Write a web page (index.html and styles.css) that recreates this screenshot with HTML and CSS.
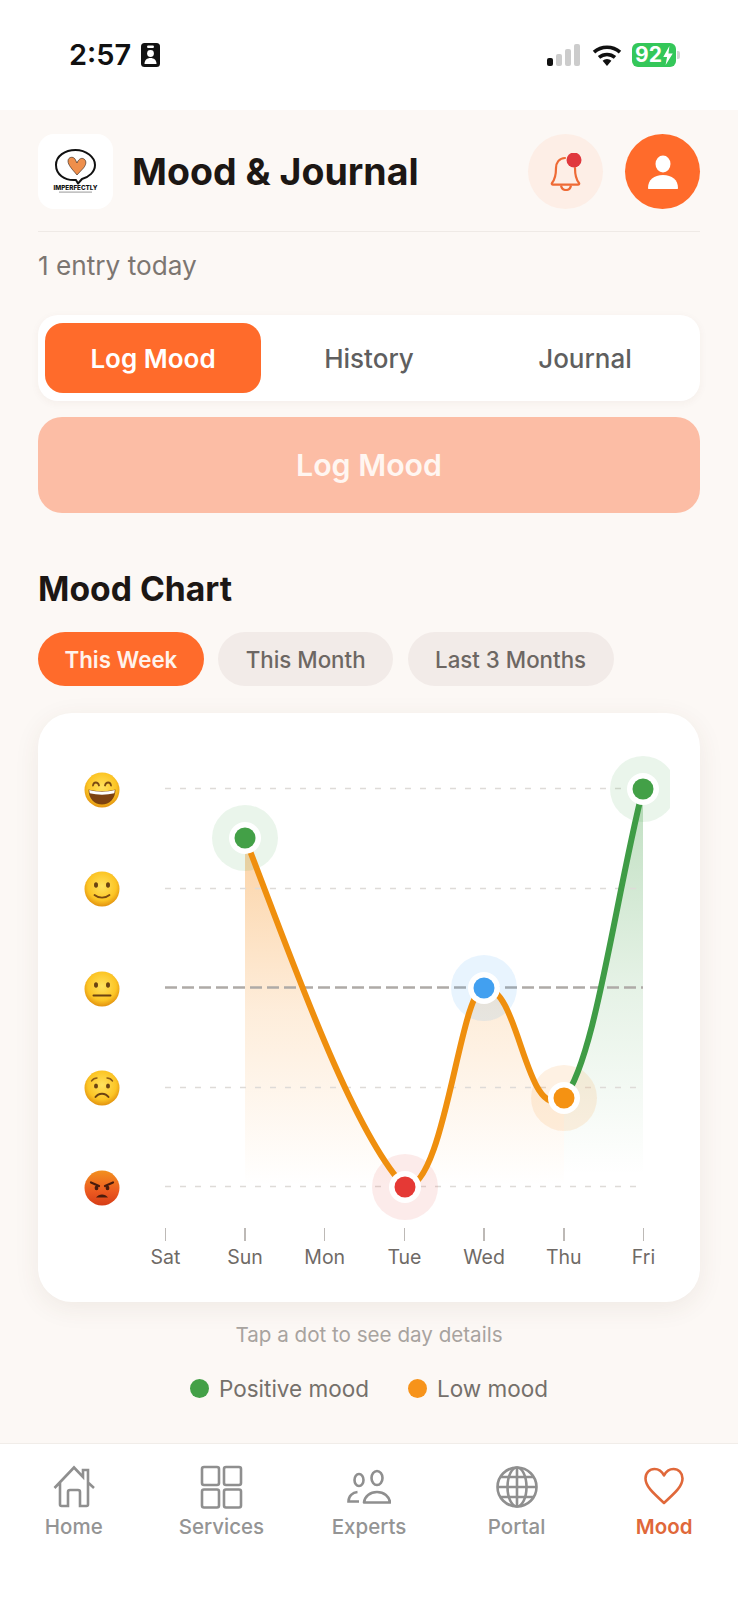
FILE: index.html
```html
<!DOCTYPE html>
<html lang="en">
<head>
  <meta charset="UTF-8" />
  <meta name="viewport" content="width=device-width, initial-scale=1.0"/>
  <title>Mood &amp; Journal</title>
  <link rel="stylesheet" href="styles.css">
</head>
<body>
  <svg class="defs" width="0" height="0">
    <defs>
      <radialGradient id="yellow" cx="50%" cy="42%" r="58%">
        <stop offset="0" stop-color="#ffe25e"/>
        <stop offset="0.7" stop-color="#fcc525"/>
        <stop offset="1" stop-color="#e2920f"/>
      </radialGradient>
      <linearGradient id="angry" x1="0" y1="0" x2="0" y2="1">
        <stop offset="0" stop-color="#f2901f"/>
        <stop offset="0.6" stop-color="#ec5a20"/>
        <stop offset="1" stop-color="#d63d17"/>
      </linearGradient>
      <linearGradient id="fillOrange" gradientUnits="userSpaceOnUse" x1="0" y1="838" x2="0" y2="1186">
        <stop offset="0" stop-color="#f7962a" stop-opacity="0.42"/>
        <stop offset="0.5" stop-color="#f7962a" stop-opacity="0.17"/>
        <stop offset="1" stop-color="#f7962a" stop-opacity="0"/>
      </linearGradient>
      <linearGradient id="fillGreen" gradientUnits="userSpaceOnUse" x1="0" y1="789" x2="0" y2="1175">
        <stop offset="0" stop-color="#43a047" stop-opacity="0.34"/>
        <stop offset="0.5" stop-color="#43a047" stop-opacity="0.14"/>
        <stop offset="1" stop-color="#43a047" stop-opacity="0"/>
      </linearGradient>
    </defs>
  </svg>

  <div class="statusbar">
    <div class="status-left">
      <span class="time">2:57</span>
      <svg class="id-icon" viewBox="0 0 19 24">
        <rect width="19" height="24" rx="3.500" fill="#111"/>
        <rect x="6" y="2.500" width="7" height="2.400" rx="1.200" fill="#fff"/>
        <circle cx="9.500" cy="10.500" r="3.400" fill="#fff"/>
        <path d="M3.500 21c0-4 2.500-6 6-6s6 2 6 6z" fill="#fff"/>
      </svg>
    </div>
    <div class="status-right">
      <svg class="signal" viewBox="0 0 34 22">
        <rect x="0" y="14" width="6" height="8" rx="2" fill="#111"/>
        <rect x="9" y="10" width="6" height="12" rx="2" fill="#ccc"/>
        <rect x="18" y="5" width="6" height="17" rx="2" fill="#ccc"/>
        <rect x="27" y="0" width="6" height="22" rx="2" fill="#ccc"/>
      </svg>
      <svg class="wifi" viewBox="0 0 30 22">
        <path d="M15 22l-4.400-5.200a6.600 6.600 0 0 1 8.800 0z" fill="#111"/>
        <path d="M2 8.200a19.500 19.500 0 0 1 26 0M7 13.400a12.400 12.400 0 0 1 16 0" fill="none" stroke="#111" stroke-width="3.600"/>
      </svg>
      <div class="battery">
        <span>92</span>
        <svg class="bolt" viewBox="0 0 10 20"><path d="M6.500 0L0 11.500h4L2.500 20 10 8H5.500z" fill="#fff"/></svg>
        <i class="battery-cap"></i>
      </div>
    </div>
  </div>

  <main>
    <header>
      <div class="logo">
        <svg viewBox="0 0 75 75" width="75" height="75">
          <path d="M38 46C26 47 18 40 18 31 18 22 27 16 37.500 16 48 16 57 23 57 31 57 38 51 43 44 45L40 49.500z" fill="none" stroke="#111" stroke-width="2" stroke-linejoin="round"/>
          <path d="M39 41C34 35 30 31 30 27c0-4 5-5 7-2l2 4c1-3 4-6 7-4 3 2 2 6-.5 9z" fill="#ee8f4c" stroke="#2a1c14" stroke-width="0.600"/>
          <text x="37.500" y="55.500" class="logo-name">IMPERFECTLY</text>
          <rect x="21" y="57.500" width="33" height="1.200" fill="#aaa"/>
        </svg>
      </div>
      <h1>Mood &amp; Journal</h1>
      <div class="head-btns">
        <div class="round-btn bell-btn">
          <svg viewBox="0 0 32 38" width="32" height="38">
            <path d="M15 5c-6 0-9 5-9 10 0 8-1.500 12-4 15-.6.800 0 1.600 1 1.600h25c1 0 1.600-.8 1-1.600-2.500-3-4-7-4-15" fill="none" stroke="#ee6a35" stroke-width="2.200" stroke-linecap="round"/>
            <path d="M11 32.500c.6 3 2.500 4.500 5 4.500s4.400-1.500 5-4.500" fill="none" stroke="#ee6a35" stroke-width="2.200"/>
            <circle cx="24" cy="7" r="7.500" fill="#e0383e"/>
          </svg>
        </div>
        <div class="round-btn avatar-btn">
          <svg viewBox="0 0 32 34" width="32" height="34">
            <ellipse cx="16" cy="9" rx="7.500" ry="8.500" fill="#fff"/>
            <path d="M1 33c0-8 6-13 15-13s15 5 15 13c0 .6-.4 1-1 1H2c-.6 0-1-.4-1-1z" fill="#fff"/>
          </svg>
        </div>
      </div>
    </header>

    <p class="subtitle">1 entry today</p>

    <div class="tabs">
      <button class="tab active">Log Mood</button>
      <button class="tab">History</button>
      <button class="tab">Journal</button>
    </div>

    <button class="log-btn">Log Mood</button>

    <h2>Mood Chart</h2>

    <div class="pills">
      <button class="pill active">This Week</button>
      <button class="pill">This Month</button>
      <button class="pill">Last 3 Months</button>
    </div>

    <section class="chart-card">
      <div class="chart-body">
        <div class="emoji-col">
          <svg class="emoji" viewBox="0 0 36 36">
            <circle cx="18" cy="18" r="17.500" fill="url(#yellow)"/>
            <path d="M9 13.500c.5-4 5-4 6 0M21 13.500c1-4 5.500-4 6 0" fill="none" stroke="#7a4a12" stroke-width="1.800" stroke-linecap="round"/>
            <path d="M4.500 17.500c8 2.400 19 2.400 27 0 0 9-6 15-13.500 15S4.500 26.500 4.500 17.500z" fill="#7d4210"/>
            <path d="M5.200 18c8 2.200 17.600 2.200 25.600 0l-.5 3.200c-7.500 1.900-17.100 1.900-24.600 0z" fill="#fff"/>
          </svg>
          <svg class="emoji" viewBox="0 0 36 36">
            <circle cx="18" cy="18" r="17.500" fill="url(#yellow)"/>
            <ellipse cx="12" cy="14" rx="2" ry="2.800" fill="#6b4312"/>
            <ellipse cx="24" cy="14" rx="2" ry="2.800" fill="#6b4312"/>
            <path d="M10.500 24c4 3.400 11 3.400 15 0" fill="none" stroke="#7a4a12" stroke-width="1.800" stroke-linecap="round"/>
          </svg>
          <svg class="emoji" viewBox="0 0 36 36">
            <circle cx="18" cy="18" r="17.500" fill="url(#yellow)"/>
            <ellipse cx="12" cy="14" rx="2" ry="2.800" fill="#6b4312"/>
            <ellipse cx="24" cy="14" rx="2" ry="2.800" fill="#6b4312"/>
            <path d="M9.500 24.500h17" fill="none" stroke="#6b4312" stroke-width="2" stroke-linecap="round"/>
          </svg>
          <svg class="emoji" viewBox="0 0 36 36">
            <circle cx="18" cy="18" r="17.500" fill="url(#yellow)"/>
            <path d="M7.500 11c1.500-2 3.500-3 5.500-3M28.500 11c-1.500-2-3.500-3-5.500-3" fill="none" stroke="#8a5a18" stroke-width="1.400" stroke-linecap="round"/>
            <ellipse cx="12" cy="16" rx="2" ry="2.600" fill="#6b4312"/>
            <ellipse cx="24" cy="16" rx="2" ry="2.600" fill="#6b4312"/>
            <path d="M11.500 27c3-4.500 10-4.500 13 0" fill="none" stroke="#6b4312" stroke-width="2" stroke-linecap="round"/>
          </svg>
          <svg class="emoji" viewBox="0 0 36 36">
            <circle cx="18" cy="18" r="17.500" fill="url(#angry)"/>
            <path d="M7 12.500l8 3.500M29 12.500l-8 3.500" fill="none" stroke="#4a1c0c" stroke-width="2.200" stroke-linecap="round"/>
            <ellipse cx="12.500" cy="18" rx="1.900" ry="2.300" fill="#4a1c0c"/>
            <ellipse cx="23.500" cy="18" rx="1.900" ry="2.300" fill="#4a1c0c"/>
            <path d="M12 27.500c3-4 9-4 12 0z" fill="#4a1c0c"/>
          </svg>
        </div>

        <svg class="plot" viewBox="145 755 525 470" width="525" height="470">
          <path d="M245 838C285 940 350 1130 405 1187C445 1190 460 988 484 988C520 985 525 1125 564 1098V1186H245Z" fill="url(#fillOrange)"/>
          <path d="M564 1098C595 1060 615 900 643 789V1186H564Z" fill="url(#fillGreen)"/>

          <path class="grid-line" d="M165 788.500H640M165 888.500H640M165 1087.500H640M165 1186.500H640"/>
          <path class="mid-line" d="M165 987.500H643"/>

          <circle cx="245" cy="838" r="33" fill="#43a047" fill-opacity="0.11"/>
          <circle cx="484" cy="988" r="33" fill="#42a5f5" fill-opacity="0.12"/>
          <circle cx="643" cy="789" r="33" fill="#43a047" fill-opacity="0.11"/>
          <circle cx="564" cy="1098" r="33" fill="#f7962a" fill-opacity="0.13"/>
          <circle cx="405" cy="1187" r="33" fill="#e53935" fill-opacity="0.1"/>

          <path class="curve" stroke="#ef8f0e" d="M245 838C285 940 350 1130 405 1187C445 1190 460 988 484 988C520 985 525 1125 564 1098"/>
          <path class="curve" stroke="#3f9c46" d="M564 1098C595 1060 615 900 643 789"/>

          <circle class="ring" cx="245" cy="838" r="16"/>
          <circle cx="245" cy="838" r="10.500" fill="#43a047"/>
          <circle class="ring" cx="405" cy="1187" r="16"/>
          <circle cx="405" cy="1187" r="10.500" fill="#e53935"/>
          <circle class="ring" cx="484" cy="988" r="16"/>
          <circle cx="484" cy="988" r="10.500" fill="#42a0f0"/>
          <circle class="ring" cx="564" cy="1098" r="16"/>
          <circle cx="564" cy="1098" r="10.500" fill="#f59212"/>
          <circle class="ring" cx="643" cy="789" r="16"/>
          <circle cx="643" cy="789" r="10.500" fill="#43a047"/>
        </svg>
      </div>

      <div class="days">
        <div class="day">Sat</div>
        <div class="day">Sun</div>
        <div class="day">Mon</div>
        <div class="day">Tue</div>
        <div class="day">Wed</div>
        <div class="day">Thu</div>
        <div class="day">Fri</div>
      </div>
    </section>

    <p class="hint">Tap a dot to see day details</p>

    <div class="legend">
      <span class="legend-item"><i class="legend-dot green"></i>Positive mood</span>
      <span class="legend-item"><i class="legend-dot orange"></i>Low mood</span>
    </div>
  </main>

  <nav>
    <div class="nav-item">
      <svg viewBox="0 0 44 44" width="44" height="44">
        <path d="M2.500 23L22 2.500l9 9.500V5h5v12.500L42 23M8 18v21.500a1.500 1.500 0 0 0 1.500 1.500H16V27a2 2 0 0 1 2-2h8a2 2 0 0 1 2 2v14h6.500a1.500 1.500 0 0 0 1.500-1.500V18"/>
      </svg>
      <span>Home</span>
    </div>
    <div class="nav-item">
      <svg viewBox="0 0 44 44" width="44" height="44">
        <rect x="3" y="2" width="17" height="18" rx="2"/>
        <rect x="25" y="2" width="17" height="18" rx="2"/>
        <rect x="3" y="24.500" width="17" height="18" rx="2"/>
        <rect x="25" y="24.500" width="17" height="18" rx="2"/>
      </svg>
      <span>Services</span>
    </div>
    <div class="nav-item">
      <svg viewBox="0 0 44 44" width="44" height="44">
        <ellipse cx="12" cy="15" rx="4.500" ry="6"/>
        <ellipse cx="30" cy="13" rx="5.500" ry="7"/>
        <path d="M17 37.500c.6-6 6-10.500 13-10.500s12.400 4.500 13 10.500z" stroke-linejoin="round"/>
        <path d="M12 36.500H1.500c0-5.500 4-9 9-9.500"/>
      </svg>
      <span>Experts</span>
    </div>
    <div class="nav-item">
      <svg viewBox="0 0 44 44" width="44" height="44">
        <circle cx="22" cy="22" r="19.500"/>
        <ellipse cx="22" cy="22" rx="9.500" ry="19.500"/>
        <path d="M22 2.500v39M2.500 22h39M5.500 12h33M5.500 32h33"/>
      </svg>
      <span>Portal</span>
    </div>
    <div class="nav-item active">
      <svg viewBox="0 0 44 44" width="44" height="44">
        <path d="M22 38C10 27 3.500 21 3.500 13.500 3.500 8 7.500 4 12.500 4c4 0 7.500 2.500 9.500 6.500C24 6.500 27.500 4 31.500 4c5 0 9 4 9 9.500C40.500 21 34 27 22 38z" stroke-linejoin="round"/>
      </svg>
      <span>Mood</span>
    </div>
  </nav>
</body>
</html>
```

FILE: styles.css
```css
* { box-sizing: border-box; }
html, body { margin: 0; padding: 0; }
body {
  font-family: Inter, "Noto Sans", sans-serif;
  background: #fcf8f5;
  color: #1c1714;
  width: 738px;
  min-height: 1600px;
  display: flex;
  flex-direction: column;
}
button { font-family: inherit; border: none; cursor: pointer; }
.defs { display: block; height: 0; }

/* status bar */
.statusbar {
  height: 110px;
  background: #fff;
  display: flex;
  justify-content: space-between;
  padding: 43px 62px 0 69px;
}
.status-left { display: flex; gap: 10px; height: 24px; align-items: center; }
.time { font-size: 29px; font-weight: 600; color: #111; line-height: 24px; }
.id-icon { width: 19px; height: 24px; }
.status-right { display: flex; align-items: center; height: 24px; }
.signal { width: 34px; height: 22px; margin-right: 11px; }
.wifi { width: 30px; height: 22px; margin-right: 10px; }
.battery {
  position: relative;
  width: 44px;
  height: 24px;
  border-radius: 6px;
  background: #34c759;
  color: #fff;
  font-size: 21px;
  font-weight: 700;
  line-height: 24px;
  display: flex;
  align-items: center;
  padding-left: 3px;
  gap: 1px;
}
.bolt { width: 10px; height: 19px; }
.battery-cap {
  position: absolute;
  right: -4px;
  top: 8px;
  width: 3px;
  height: 8px;
  border-radius: 0 2px 2px 0;
  background: #d4d4d4;
}

/* page */
main { flex: 1; padding: 24px 38px 0; }
header {
  display: flex;
  align-items: center;
  padding-bottom: 21.500px;
  border-bottom: 1.500px solid #efeae6;
}
.logo { width: 75px; height: 75px; background: #fff; border-radius: 16px; flex: none; }
.logo svg { display: block; }
.logo-name { font-size: 6.300px; font-weight: 800; text-anchor: middle; fill: #111; }
h1 { margin: 0 0 0 19px; font-size: 37.500px; font-weight: 700; flex: 1; }
.head-btns { display: flex; gap: 22px; }
.round-btn {
  width: 75px;
  height: 75px;
  border-radius: 50%;
  display: flex;
  align-items: center;
  justify-content: center;
}
.bell-btn { background: #fdeee6; }
.avatar-btn { background: #ff6b2b; }
.subtitle { margin: 18px 0 0; font-size: 26.200px; line-height: 32px; color: #7c7671; }

.tabs {
  margin-top: 33px;
  height: 86px;
  background: #fff;
  border-radius: 20px;
  padding: 8px 7px;
  display: grid;
  grid-template-columns: repeat(3, 1fr);
  box-shadow: 0 2px 8px rgba(90, 60, 40, 0.05);
}
.tab {
  background: none;
  padding: 2px 0 0;
  font-size: 26px;
  font-weight: 500;
  color: #5f5f5f;
  border-radius: 18px;
}
.tab.active { background: #ff6b2b; color: #fff; font-weight: 600; }
.log-btn {
  display: block;
  width: 100%;
  height: 96px;
  margin-top: 16px;
  background: #fcbda5;
  color: #fff6f1;
  font-size: 30.300px;
  font-weight: 600;
  border-radius: 24px;
}

h2 { margin: 56px 0 0; font-size: 33.700px; line-height: 40px; font-weight: 700; }
.pills { display: flex; gap: 14.500px; margin-top: 23px; }
.pill {
  height: 54px;
  padding: 1px 27.500px 0;
  border-radius: 27px;
  background: #f2ebe8;
  color: #6d6763;
  font-size: 22.300px;
  font-weight: 500;
}
.pill.active { padding: 1px 26.500px 0; background: #ff6b2b; color: #fff3ec; font-weight: 600; }

/* chart */
.chart-card {
  margin-top: 27px;
  height: 589px;
  background: #fff;
  border-radius: 34px;
  padding: 42px 0 0 46px;
  box-shadow: 0 6px 26px rgba(90, 60, 40, 0.08);
}
.chart-body { display: flex; gap: 25px; }
.emoji-col { display: flex; flex-direction: column; gap: 63.500px; padding-top: 17px; flex: none; }
.emoji { display: block; width: 36px; height: 36px; }
.plot { display: block; flex: none; }
.grid-line { fill: none; stroke: #dedbd8; stroke-width: 1.500; stroke-dasharray: 6 9; }
.mid-line { fill: none; stroke: #aeaaa7; stroke-width: 2.500; stroke-dasharray: 12 5; }
.curve { fill: none; stroke-width: 6; }
.ring { fill: #fff; }
.days {
  display: grid;
  grid-template-columns: repeat(7, 79.700px);
  margin: 3px 0 0 41.500px;
  width: 558px;
}
.day {
  display: flex;
  flex-direction: column;
  align-items: center;
  gap: 4px;
  font-size: 19.500px;
  line-height: 24px;
  color: #6f6a66;
}
.day::before {
  content: "";
  width: 1.500px;
  height: 13px;
  background: #bdb9b6;
}

.hint { margin: 21px 0 0; text-align: center; font-size: 20.600px; line-height: 24px; color: #a8a39f; }
.legend { display: flex; justify-content: center; gap: 39px; margin-top: 28px; }
.legend-item {
  display: flex;
  align-items: center;
  gap: 10px;
  font-size: 22.500px;
  line-height: 28px;
  color: #75706b;
}
.legend-dot { width: 19px; height: 19px; border-radius: 50%; }
.legend-dot.green { background: #43a047; }
.legend-dot.orange { background: #f7931a; }

/* bottom nav */
nav {
  height: 157px;
  background: #fff;
  border-top: 1px solid #f1ede9;
  padding-top: 21px;
  display: grid;
  grid-template-columns: repeat(5, 1fr);
}
.nav-item {
  display: flex;
  flex-direction: column;
  align-items: center;
  gap: 5px;
  font-size: 20.500px;
  line-height: 26px;
  font-weight: 500;
  color: #949494;
}
.nav-item svg { fill: none; stroke: #8f8f8f; stroke-width: 2.600; }
.nav-item.active { color: #e0683a; font-weight: 600; }
.nav-item.active svg { stroke: #e0683a; }
```
